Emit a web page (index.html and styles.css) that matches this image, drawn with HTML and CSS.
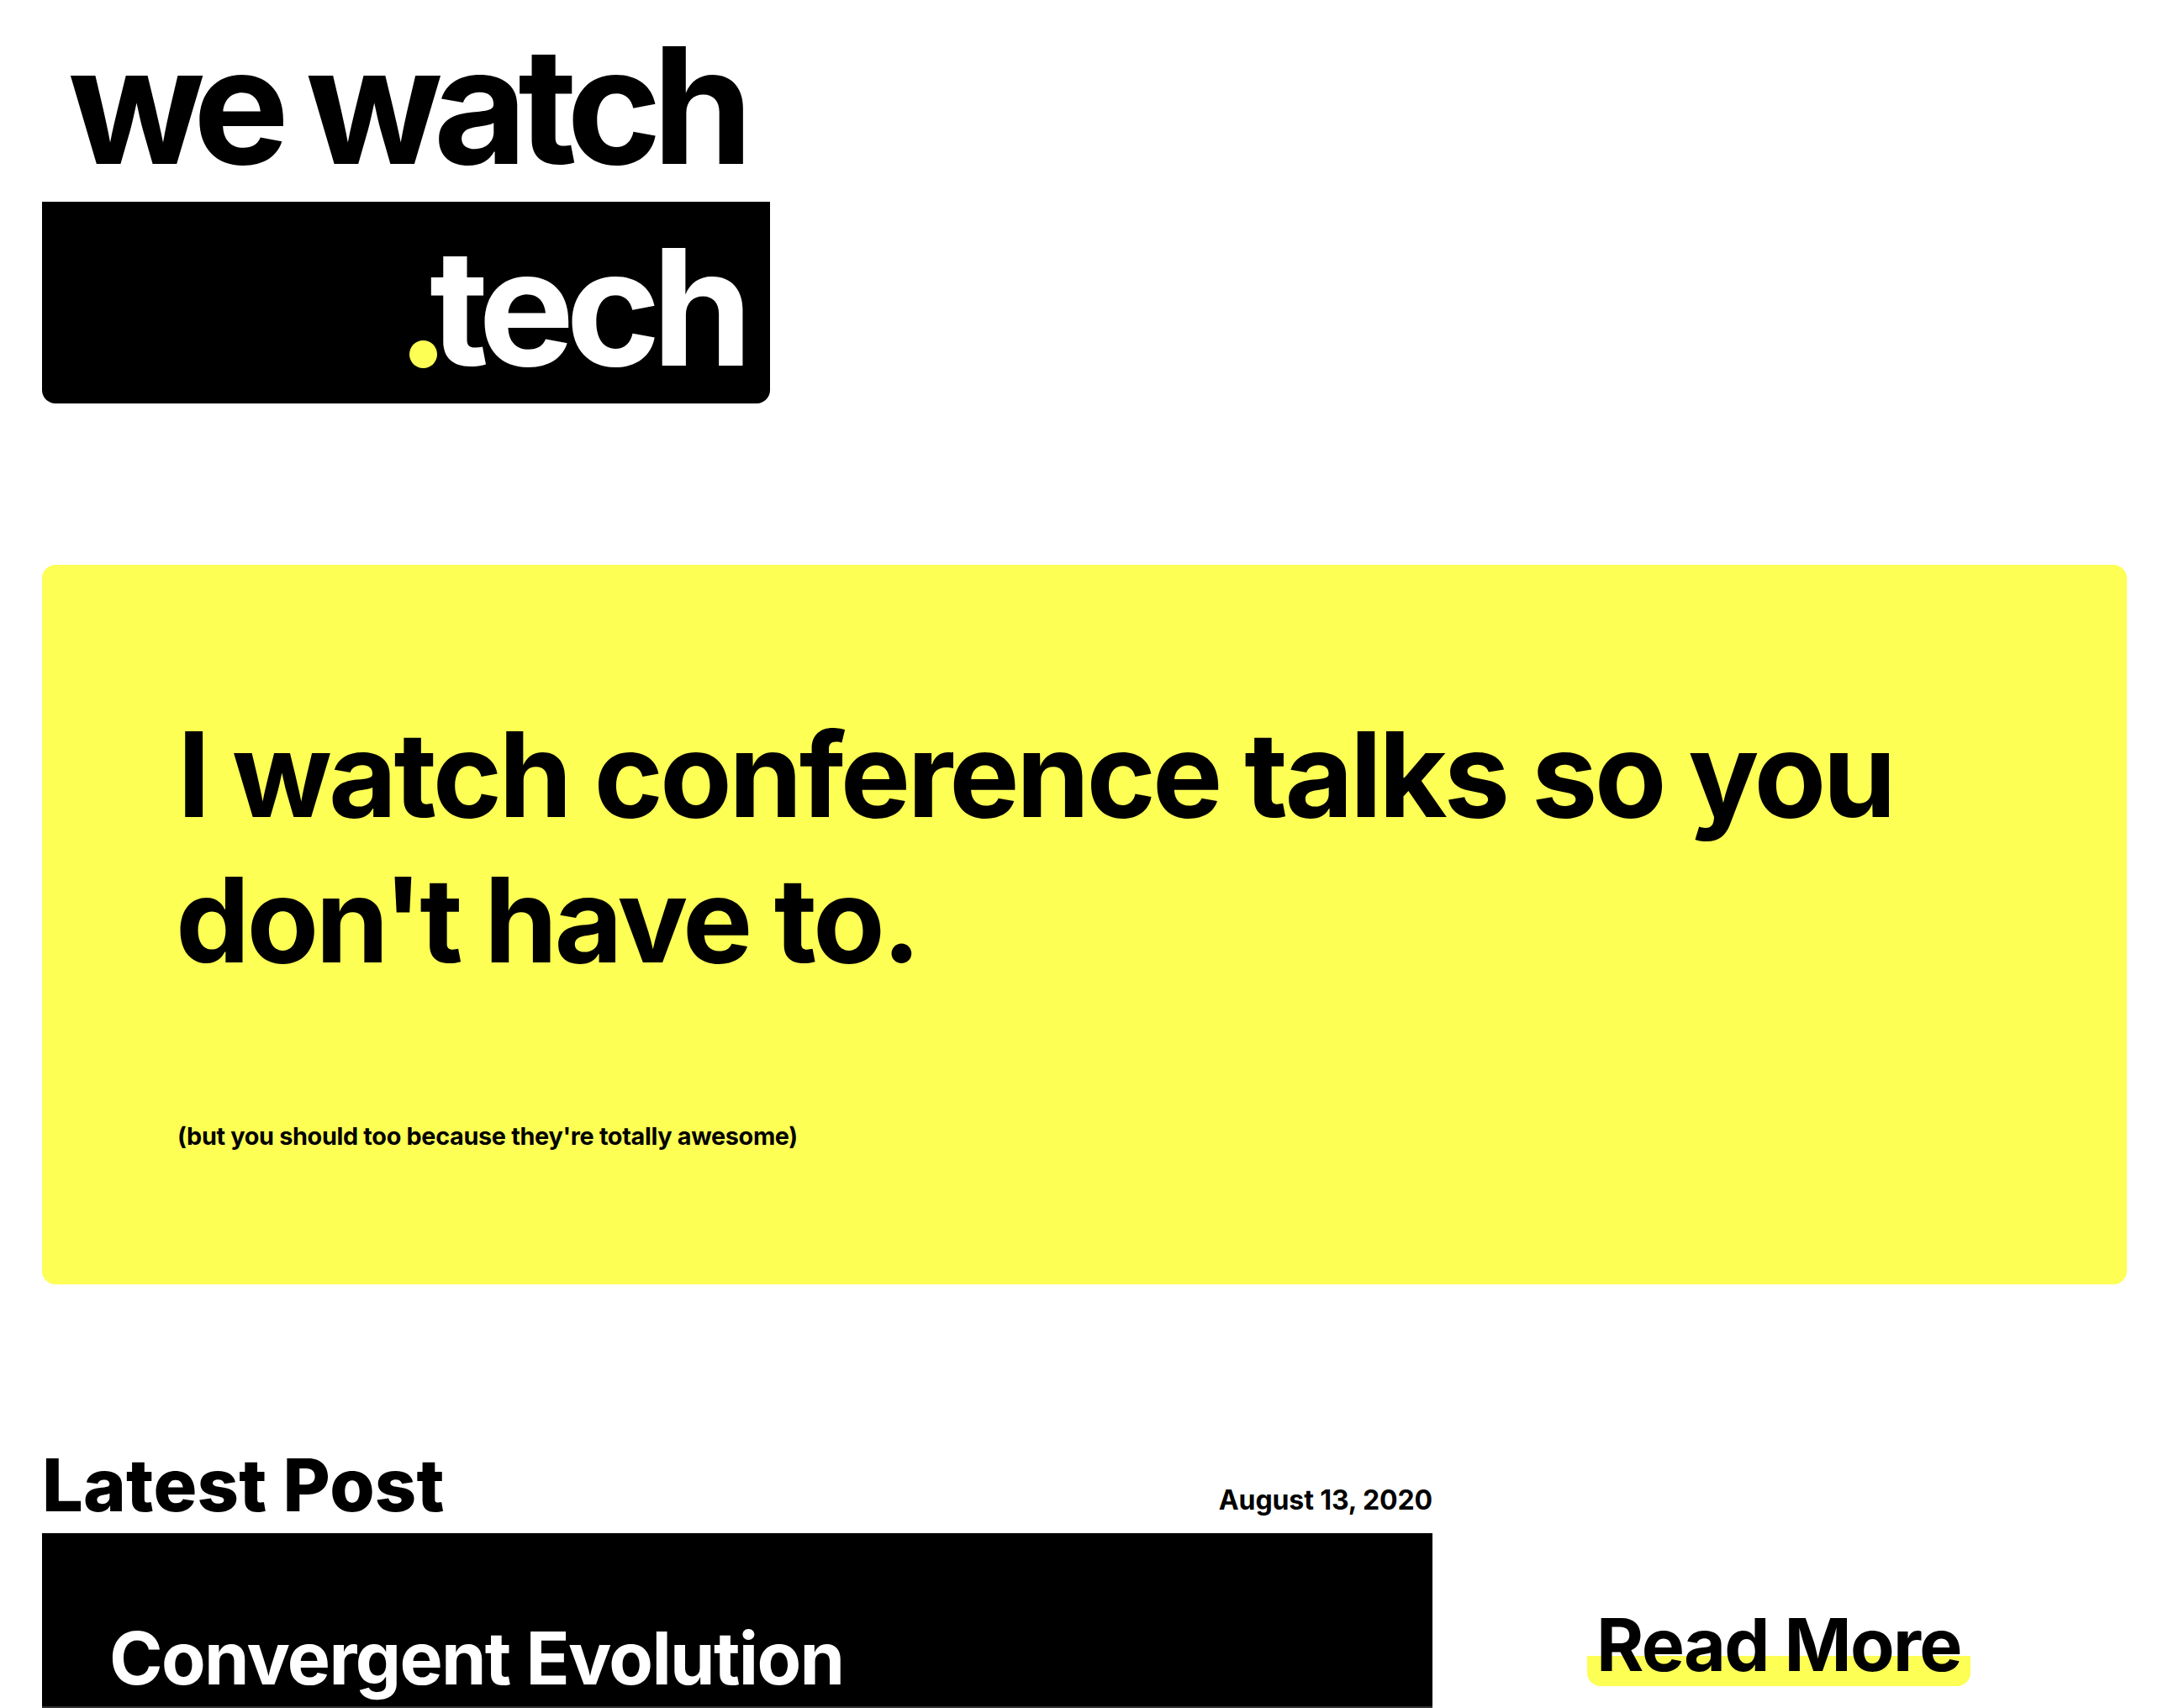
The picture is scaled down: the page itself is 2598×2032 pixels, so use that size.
FILE: index.html
```html
<!DOCTYPE html>
<html lang="en">
<head>
<meta charset="utf-8">
<title>we watch .tech</title>
<link rel="stylesheet" href="styles.css">
</head>
<body>
<header class="logo">
  <div class="logo-top"><span>we</span> <span class="watch">watch</span></div>
  <div class="logo-bottom"><i class="dot"></i><span>tech</span></div>
</header>
<section class="hero">
  <h1>I watch conference talks so you<br><span class="line-two">don't have to.</span></h1>
  <p>(but you should too because they're totally awesome)</p>
</section>
<main class="latest">
  <article class="post">
    <div class="post-head"><h2>Latest Post</h2><time>August 13, 2020</time></div>
    <div class="card"><h3>Convergent Evolution</h3></div>
  </article>
  <aside class="more"><a class="read">Read More</a></aside>
</main>
</body>
</html>
```
FILE: styles.css
```css
* { box-sizing: border-box; margin: 0; padding: 0; }
body { height: 2032px; overflow: hidden; padding: 0 68px 0 50px; background: #fff; color: #000; font-family: Inter, sans-serif; font-weight: 700; }
.logo { width: 866px; height: 480px; font-size: 192px; line-height: 240px; letter-spacing: -11.9px; white-space: nowrap; }
.logo-top { height: 240px; padding: 5px 0 0 31px; }
.watch { margin-left: -2px; letter-spacing: -10.8px; }
.logo-bottom { display: flex; justify-content: flex-end; height: 240px; padding-right: 31px; background: #000; color: #fff; border-radius: 0 0 16px 16px; letter-spacing: -10.3px; }
.logo-bottom span { padding-top: 5px; }
.dot { width: 33px; height: 33px; margin: 165px -9px 0 0; border-radius: 50%; background: #fdff54; }
.hero { height: 856px; margin-top: 192px; padding: 163px 161px; border-radius: 16px; background: #fdff54; }
.hero h1 { font-size: 140px; line-height: 172.5px; letter-spacing: -3.7px; white-space: nowrap; }
.line-two { margin-left: -2px; letter-spacing: -3.85px; }
.hero p { margin-top: 152px; font-size: 28.8px; line-height: 40px; letter-spacing: -0.32px; white-space: nowrap; }
.latest { display: flex; margin-top: 192px; }
.post { width: 1654px; }
.post-head { display: flex; justify-content: space-between; align-items: flex-start; height: 104px; }
.post-head h2 { font-size: 86.4px; line-height: 93px; font-weight: 800; letter-spacing: 0.2px; }
.post-head time { margin-top: 45px; font-size: 32px; line-height: 40px; letter-spacing: -0.1px; }
.card { height: 208px; padding: 97px 80px 0; border-bottom: 2px solid #333; background: #000; color: #fff; }
.card h3 { font-size: 86px; line-height: 104px; letter-spacing: -1.65px; white-space: nowrap; }
.more { padding: 182px 0 0 184px; }
.read { display: block; width: 456px; height: 104px; padding: 6px 0 0 11px; border-radius: 0 0 16px 16px; background: linear-gradient(#fdff54, #fdff54) bottom / 100% 36px no-repeat; font-size: 86px; line-height: 98px; letter-spacing: -1.7px; white-space: nowrap; }
```
